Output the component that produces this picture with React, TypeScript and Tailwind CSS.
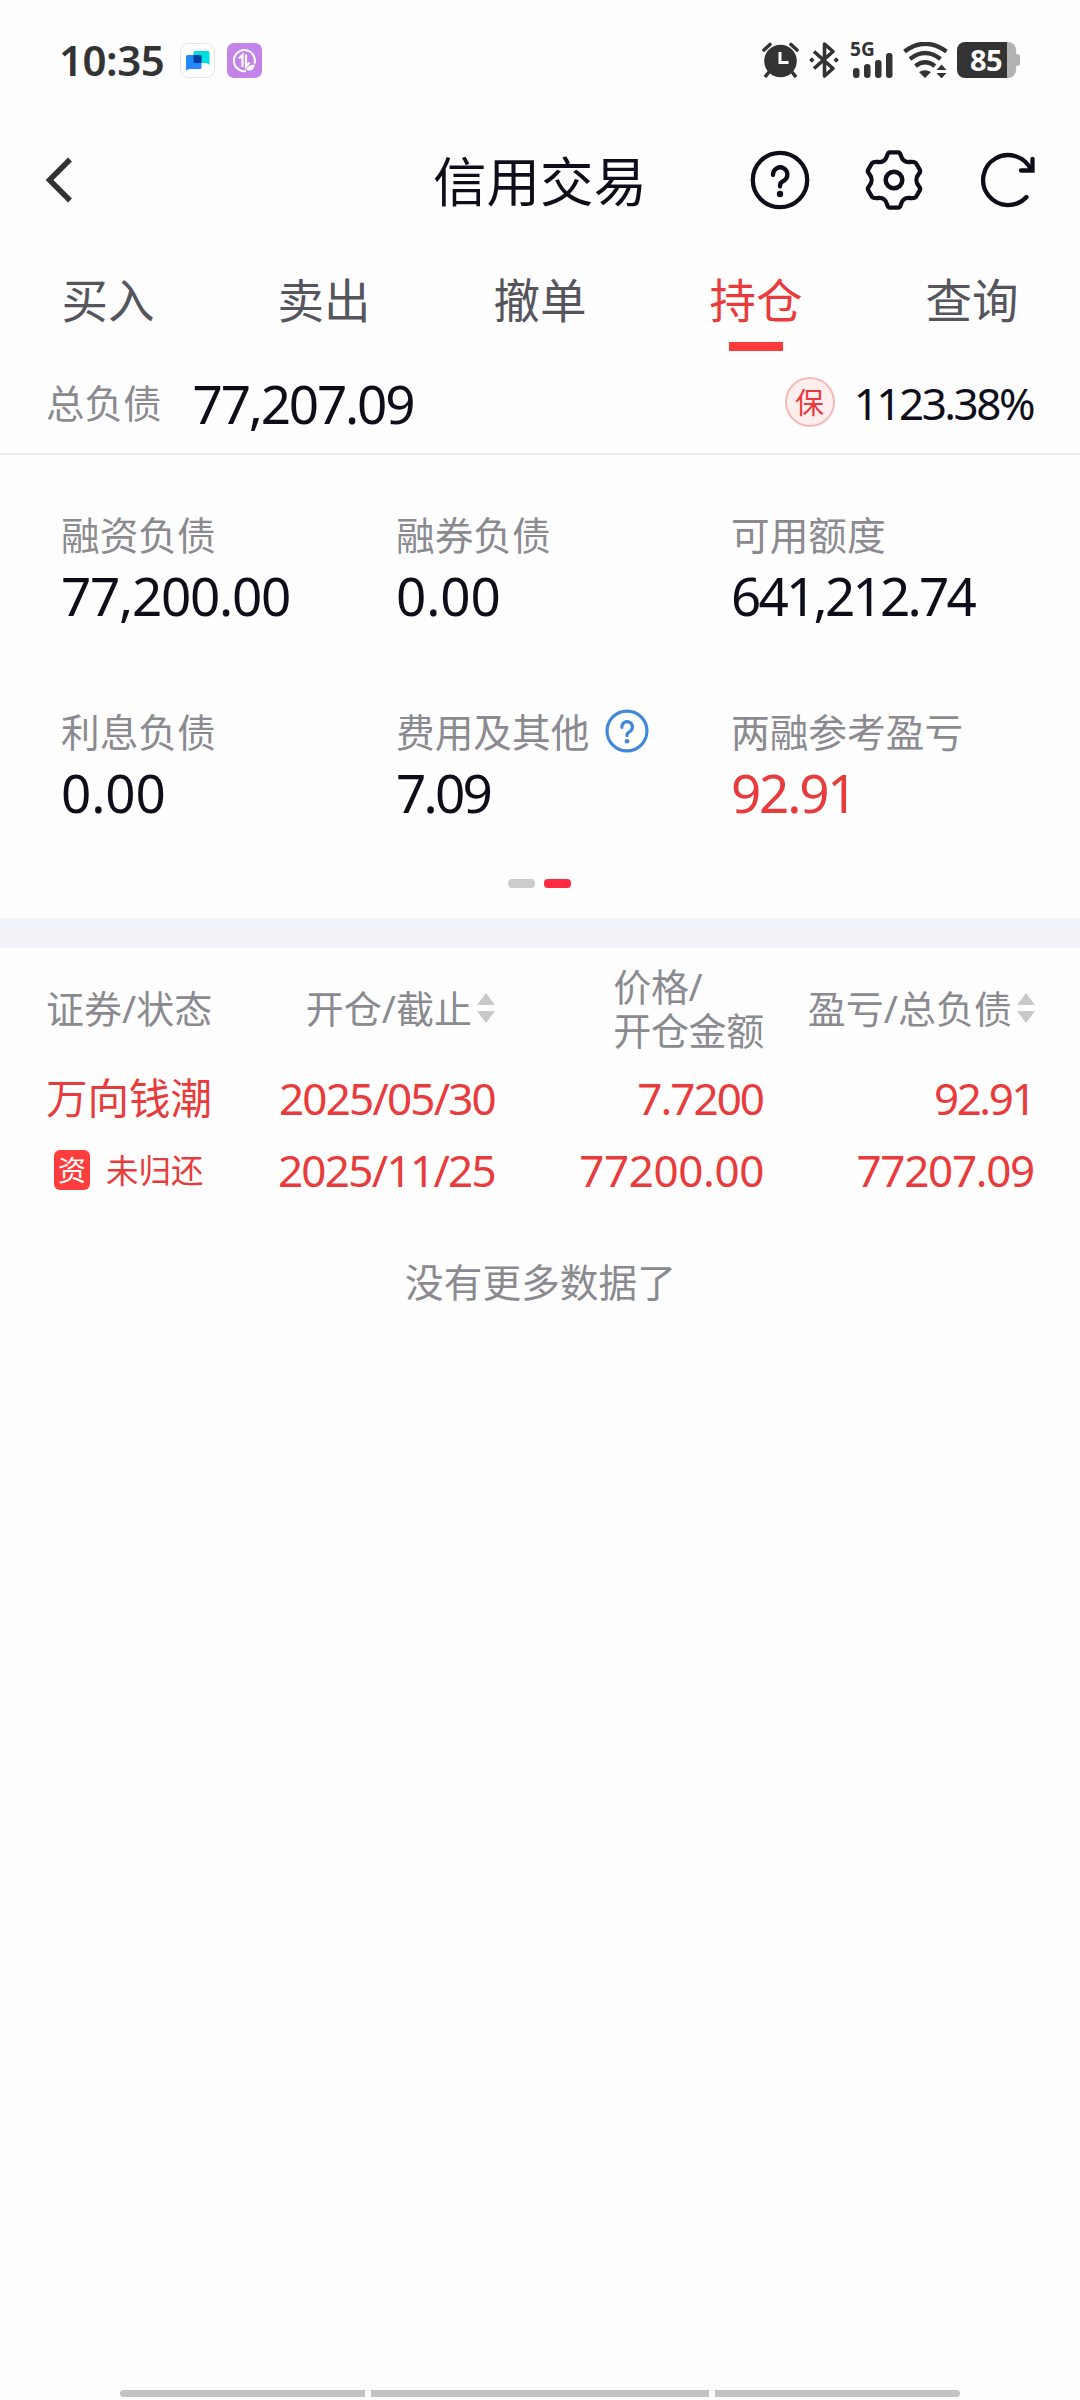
import { useState } from 'react';

const tabs = ['买入', '卖出', '撤单', '持仓', '查询'];

const debtItems = [
  { label: '融资负债', value: '77,200.00', tracking: 'tracking-[-1.3px]' },
  { label: '融券负债', value: '0.00', tracking: 'tracking-[-0.1px]' },
  { label: '可用额度', value: '641,212.74', tracking: 'tracking-[-2.8px]' },
  { label: '利息负债', value: '0.00', tracking: 'tracking-[-0.1px]' },
  { label: '费用及其他', value: '7.09', tracking: 'tracking-[-2.8px]', help: true },
  { label: '两融参考盈亏', value: '92.91', tracking: 'tracking-[-2.2px]', tone: 'text-[#e83c3c]' },
];

function AlarmIcon() {
  return (
    <svg className="h-9 w-[37px]" viewBox="0 0 37 36" fill="none">
      <circle cx="18.5" cy="19" r="16.3" fill="#333" />
      <path d="M2 8l6-5.5M35 8l-6-5.5" stroke="#333" strokeWidth="3.6" strokeLinecap="round" />
      <path d="M7 30l-4 5M30 30l4 5" stroke="#333" strokeWidth="3.6" />
      <path d="M18 10v10.500h8.500" stroke="#fff" strokeWidth="3" />
    </svg>
  );
}

function BluetoothIcon() {
  return (
    <svg className="h-9 w-[30px]" viewBox="0 0 30 36" fill="none" stroke="#333">
      <path d="M5 9.500l19 17-8.500 7.500V2L24 9.500 5 26.500" strokeWidth="3.600" strokeLinejoin="round" />
      <path d="M2.800 15.300l2.700 2.700-2.700 2.700L.1 18zM27.200 15.300l2.700 2.700-2.700 2.700-2.700-2.700z" fill="#333" stroke="none" />
    </svg>
  );
}

function SignalIcon() {
  return (
    <div className="relative h-9 w-[42px]">
      <span className="absolute -left-px top-0 text-[19px] leading-[14px] font-bold tracking-[0.200px]">5G</span>
      <svg className="h-9 w-[42px]" viewBox="0 0 42 36" fill="#333">
        <rect x="2" y="26" width="6.500" height="10" rx="3" />
        <rect x="13" y="22" width="6.500" height="14" rx="3" />
        <rect x="24" y="18" width="6.500" height="18" rx="3" />
        <rect x="35" y="11" width="6.500" height="25" rx="3" />
      </svg>
    </div>
  );
}

function WifiIcon() {
  return (
    <svg className="h-9 w-[45px]" viewBox="0 0 45 36" fill="none" stroke="#333" strokeWidth="4.300">
      <path d="M1.500 9.500Q22 -6 43.500 9.500" />
      <path d="M7 17Q22 5 37.500 17" />
      <path d="M12.500 24Q22 16.500 32 24" />
      <path d="M16 30Q22 26.500 28 30L22 36zM33.500 28l5-5.500 5 5.500zM33.500 31l5 5.500 5-5.500z" fill="#333" stroke="none" />
    </svg>
  );
}

function Battery() {
  return (
    <div className="flex items-center">
      <div className="flex h-9 w-[50px] items-center justify-center rounded-l-[8px] bg-[#333] pl-2 text-[29px] leading-9 font-bold tracking-[-0.500px] text-white">85</div>
      <div className="h-9 w-[9px] rounded-r-[8px] bg-[#b2b2b2]" />
      <div className="h-3 w-1 rounded-r-[3px] bg-[#b2b2b2]" />
    </div>
  );
}

function StatusBar() {
  return (
    <div className="flex h-[120px] items-center justify-between pr-[60px] pl-[59px] text-[#333]">
      <div className="flex items-center">
        <span className="w-[121px] text-[42px] leading-9 font-semibold tracking-[-0.500px]">10:35</span>
        <svg className="h-[35px] w-[35px]" viewBox="0 0 35 35">
          <rect x=".5" y=".5" width="34" height="34" rx="8" fill="#fff" stroke="#e4e4e4" />
          <path d="M15 8h13q1.500 0 1.500 1.500v12.500l-3-2H15q-1.500 0-1.500-1.500v-9Q13.500 8 15 8z" fill="#00dfe0" />
          <path d="M7.500 12H20q1.500 0 1.500 1.500v11q0 1.500-1.500 1.500H9l-3 1.500v-14Q6 12 7.500 12z" fill="#2488ff" />
          <path d="M13.500 12H20q1.500 0 1.500 1.500V20H15q-1.500 0-1.500-1.500z" fill="#00409c" />
        </svg>
        <svg className="ml-3 h-[35px] w-[35px]" viewBox="0 0 35 35" fill="none" stroke="#fff">
          <rect width="35" height="35" rx="7" fill="#c383e9" stroke="none" />
          <path d="M27.500 20.500A10.500 10.500 0 1 0 19 28" strokeWidth="2" />
          <path d="M12 15.500l3.500-3.500v12M19 11.500v12l3.500-4" strokeWidth="2.200" />
          <path d="M19 27q1-5 9-5.500-1 6-6 6z" fill="#fff" stroke="none" />
        </svg>
      </div>
      <div className="flex items-center">
        <AlarmIcon />
        <div className="ml-2.5"><BluetoothIcon /></div>
        <div className="ml-3"><SignalIcon /></div>
        <div className="ml-2.5"><WifiIcon /></div>
        <div className="ml-[9px]"><Battery /></div>
      </div>
    </div>
  );
}

function HelpIcon({ className }: { className: string }) {
  return (
    <svg className={className} viewBox="0 0 60 60" fill="none" stroke="currentColor" strokeWidth="4.300" strokeLinecap="round">
      <circle cx="30" cy="30" r="27.200" />
      <path d="M23 25v-.5a7.200 7.200 0 1 1 10.800 6.300C31 32 30 33 30 35.500v1" />
      <circle cx="30" cy="44" r="3.200" fill="currentColor" stroke="none" />
    </svg>
  );
}

function Header() {
  return (
    <header className="grid h-30 grid-cols-[1fr_auto_1fr] items-center px-10 text-[#0e0e1a]">
      <svg className="ml-[5px] h-[46px] w-7" viewBox="0 0 28 46" fill="none" stroke="#333" strokeWidth="5.500">
        <path d="M25 2.500L4.500 23 25 43.500" />
      </svg>
      <h1 className="pt-1 text-[53.500px] leading-none">信用交易</h1>
      <div className="flex items-center justify-end gap-[54px]">
        <HelpIcon className="h-15 w-15" />
        <svg className="h-15 w-15" viewBox="0 0 60 60" fill="none" stroke="currentColor" strokeWidth="4.300" strokeLinejoin="round">
          <path d="M26 2.300h8c2 0 2.500 1.500 3 3.500c1 4 4 6.700 8.500 6.200c3-.4 5.700-.2 6.700 1.500l3.500 6c1 1.800.5 3-1 4.500c-3 3.500-3 8.500 0 12c1.500 1.500 2 2.700 1 4.500l-3.500 6c-1 1.700-3.700 1.900-6.700 1.500c-4.500-.5-7.500 2.200-8.500 6.200c-.5 2-1 3.500-3 3.500h-8c-2 0-2.500-1.500-3-3.500c-1-4-4-6.700-8.500-6.200c-3 .4-5.700.2-6.700-1.500l-3.500-6c-1-1.800-.5-3 1-4.500c3-3.500 3-8.500 0-12c-1.500-1.500-2-2.700-1-4.500l3.500-6c1-1.700 3.700-1.900 6.700-1.500c4.500.5 7.500-2.200 8.500-6.200c.5-2 1-3.500 3-3.500z" />
          <circle cx="30" cy="30" r="8.300" strokeWidth="4.500" />
        </svg>
        <svg className="ml-0.5 h-15 w-15" viewBox="0 0 60 60" fill="none" stroke="currentColor" strokeWidth="4.300" strokeLinecap="round">
          <path d="M46.500 47A25 25 0 1 1 51 20" />
          <path d="M52.500 9v11.500H41" />
        </svg>
      </div>
    </header>
  );
}

function SortIcon() {
  return (
    <svg className="ml-[5px] h-[30px] w-[18px]" viewBox="0 0 18 30" fill="#c9c9c9">
      <path d="M0 12L9 0l9 12zM0 18l9 12 9-12z" />
    </svg>
  );
}

export default function App() {
  const [activeTab, setActiveTab] = useState('持仓');

  return (
    <div className="flex h-[2400px] w-[1080px] flex-col overflow-hidden bg-[#fefefe] font-['Noto_Sans','Noto_Sans_CJK_SC',sans-serif] text-[#0e0e1a]">
      <StatusBar />
      <Header />

      <nav className="grid h-[111px] grid-cols-5">
        {tabs.map((tab) => (
          <button
            key={tab}
            onClick={() => setActiveTab(tab)}
            className={`flex flex-col items-center justify-end text-[46.500px] ${activeTab === tab ? 'text-[#e93b3b]' : 'text-[#55555e]'}`}
          >
            <span className="mb-[17px] leading-[50px]">{tab}</span>
            <span className={`h-[9px] w-[54px] ${activeTab === tab ? 'bg-[#ff3b3b]' : ''}`} />
          </button>
        ))}
      </nav>

      <section className="flex h-26 items-center border-b-2 border-[#ededed] pr-[47px] pl-[46px]">
        <span className="pt-0.5 text-[38.500px] leading-none text-[#8a8a90]">总负债</span>
        <span className="ml-[31px] pt-0.5 text-[53px] leading-none tracking-[-2.200px]">77,207.09</span>
        <span className="ml-auto flex h-[50px] w-[50px] items-center justify-center rounded-full border-2 border-[#f3bab5] bg-[#feeeee] text-[29px] leading-none text-[#e93b3b]">保</span>
        <span className="ml-[19px] pt-0.5 text-[44px] leading-none tracking-[-2.500px]">1123.38%</span>
      </section>

      <section className="grid h-[424px] grid-cols-[335px_335px_1fr] grid-rows-[197px_auto] pt-[55px] pl-[61px]">
        {debtItems.map((item) => (
          <div key={item.label}>
            <div className="flex h-[50px] items-center text-[38.700px] leading-none whitespace-nowrap text-[#8a8a90]">
              {item.label}
              {item.help && <HelpIcon className="mb-[3px] ml-4 h-11 w-11 text-[#3f87d9]" />}
            </div>
            <div className={`text-[53px] leading-[72px] ${item.tracking} ${item.tone ?? ''}`}>{item.value}</div>
          </div>
        ))}
      </section>

      <div className="flex h-[39px] justify-center gap-[9px] pr-0.5">
        <span className="h-[9px] w-[27px] rounded bg-[#ccc]" />
        <span className="h-[9px] w-[27px] rounded bg-[#ff2a40]" />
      </div>
      <div className="h-[30px] bg-[#f2f3f8]" />

      <section className="pr-[45px] pl-[46px]">
        <div className="grid h-[122px] grid-cols-[170px_279px_269px_1fr] items-center pb-[3px] text-[38px] leading-11 whitespace-nowrap text-[#8a8a90]">
          <span>证券/状态</span>
          <span className="flex items-center justify-end">开仓/截止<SortIcon /></span>
          <span className="justify-self-end tracking-[-0.300px]">价格/<br />开仓金额</span>
          <span className="flex items-center justify-end">盈亏/总负债<SortIcon /></span>
        </div>
        <div className="grid h-[56px] grid-cols-[170px_279px_269px_1fr] items-center text-right text-[44px] leading-none text-[#e83c3c]">
          <span className="pt-0.5 text-left text-[41.500px]">万向钱潮</span>
          <span className="tracking-[-1.800px]">2025/05/30</span>
          <span className="pr-px tracking-[-2px]">7.7200</span>
          <span className="pr-px tracking-[-2.500px]">92.91</span>
        </div>
        <div className="mt-3.5 grid h-[60px] grid-cols-[170px_279px_269px_1fr] items-center text-right text-[44px] leading-none text-[#e83c3c]">
          <span className="flex items-center pl-2">
            <span className="flex h-10 w-9 items-center justify-center rounded-md bg-[#ff3d3d] text-[28px] text-white">资</span>
            <span className="ml-4 pt-[3px] text-[32.500px] whitespace-nowrap">未归还</span>
          </span>
          <span className="tracking-[-1.700px]">2025/11/25</span>
          <span className="tracking-[-0.400px]">77200.00</span>
          <span className="pr-px tracking-[-1.300px]">77207.09</span>
        </div>
        <p className="mt-[62px] text-center text-[38.700px] leading-[40px] text-[#8a8a90]">没有更多数据了</p>
      </section>

      <div className="mt-auto mb-[3px] flex justify-center gap-1.5">
        <span className="h-[7px] w-[245px] rounded-l-full bg-[#c2c2c2]" />
        <span className="h-[7px] w-[338px] bg-[#c2c2c2]" />
        <span className="h-[7px] w-[245px] rounded-r-full bg-[#c2c2c2]" />
      </div>
    </div>
  );
}
